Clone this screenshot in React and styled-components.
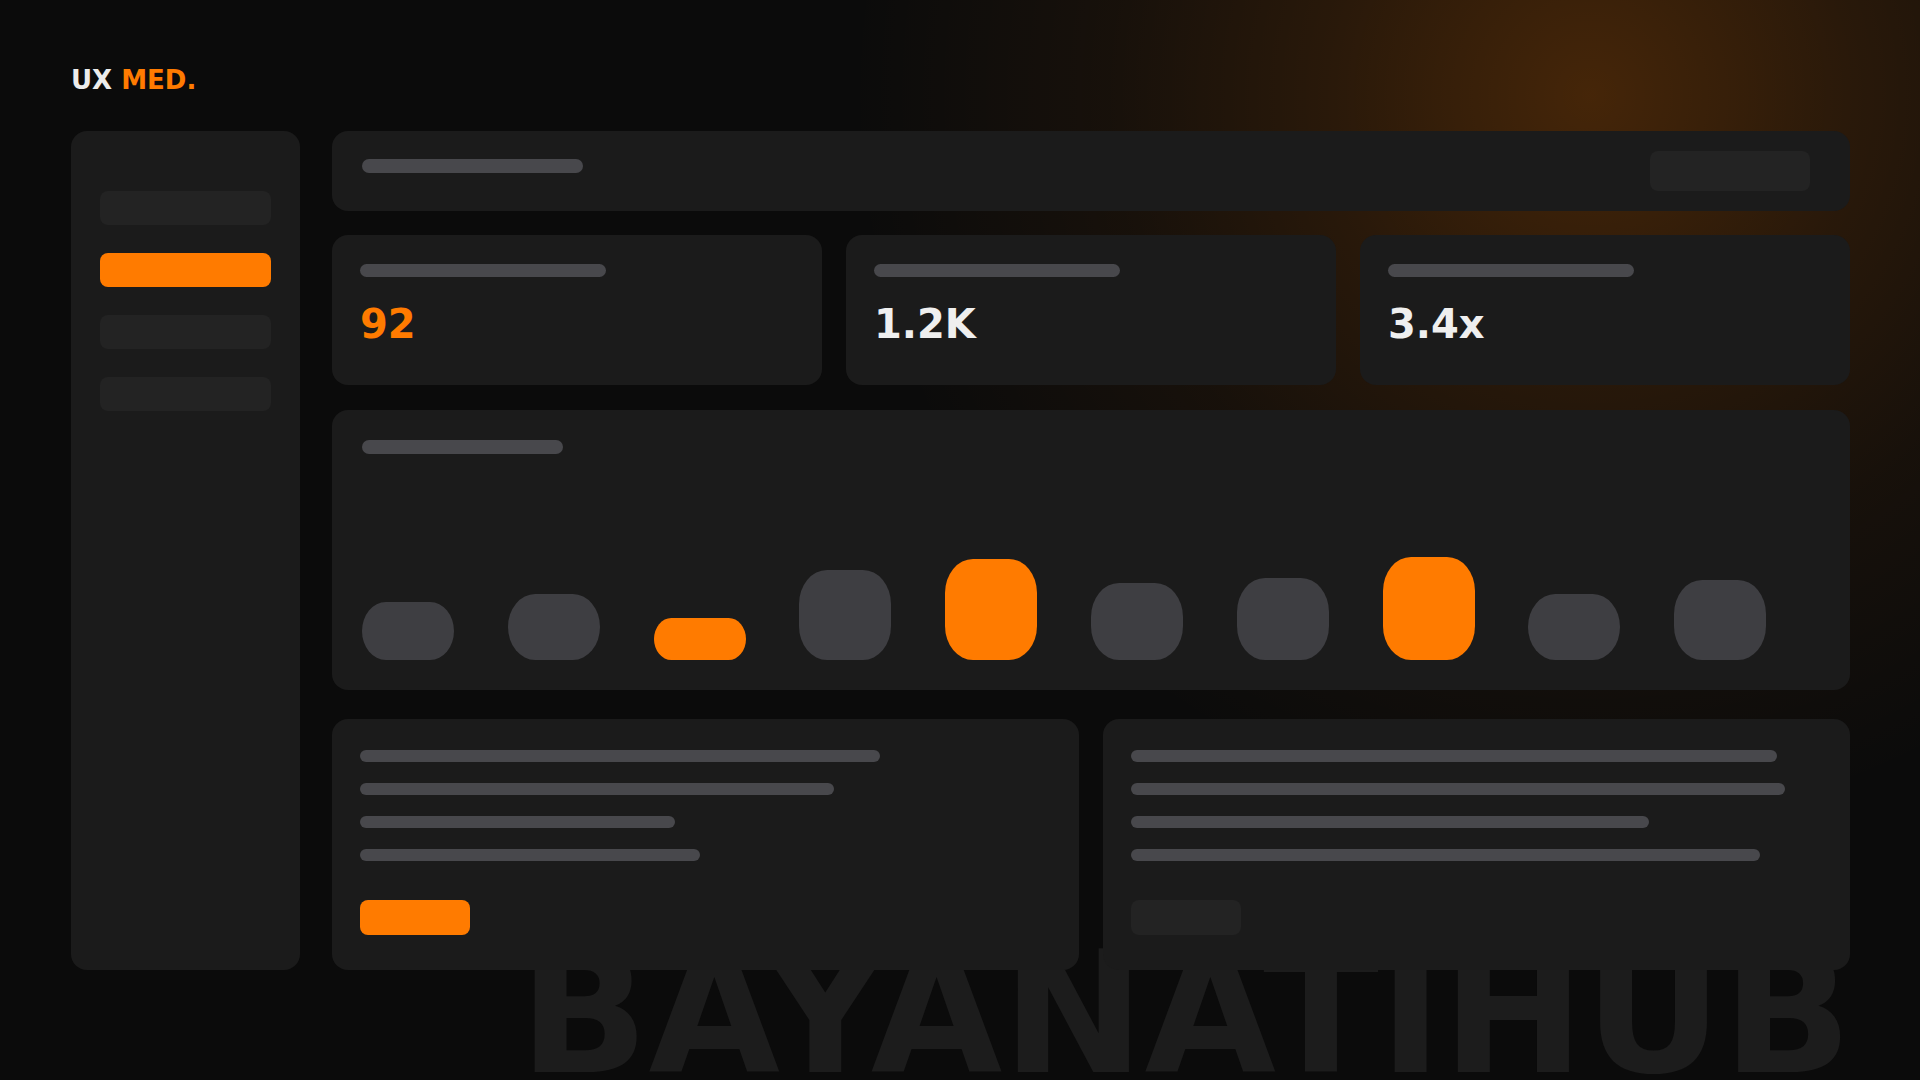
import React from 'react';
import styled, { createGlobalStyle } from 'styled-components';

const GlobalStyle = createGlobalStyle`
  html, body {
    margin: 0;
    padding: 0;
    background: #0b0b0b;
  }
  * {
    box-sizing: border-box;
  }
`;

const orange = '#ff7b00';
const card = '#1b1b1b';
const skeleton = '#48484c';

const Page = styled.div`
  position: relative;
  width: 1920px;
  height: 1080px;
  overflow: hidden;
  padding: 65px 70px 0 71px;
  font-family: "DejaVu Sans", sans-serif;
  background:
    radial-gradient(circle at 1590px 95px,
      rgba(255, 122, 0, 0.24) 0,
      rgba(255, 122, 0, 0.12) 270px,
      rgba(255, 122, 0, 0.05) 480px,
      rgba(255, 122, 0, 0) 740px),
    #0b0b0b;
`;

const Watermark = styled.div`
  position: absolute;
  left: 519px;
  bottom: -18px;
  z-index: 0;
  font-family: "DejaVu Sans", sans-serif;
  font-weight: 700;
  font-size: 170px;
  line-height: 1;
  color: #1c1c1c;
  white-space: nowrap;
  user-select: none;
`;

const Logo = styled.div`
  position: relative;
  z-index: 1;
  font-size: 26px;
  font-weight: 700;
  color: #ececec;
  height: 30px;
  line-height: normal;
  margin-bottom: 36px;

  span {
    color: ${orange};
  }
`;

const Layout = styled.div`
  position: relative;
  z-index: 1;
  display: flex;
  gap: 32px;
  height: 839px;
`;

const Sidebar = styled.aside`
  width: 229px;
  flex-shrink: 0;
  background: ${card};
  border-radius: 16px;
  padding: 60px 29px;
  display: flex;
  flex-direction: column;
  gap: 28px;
`;

const NavItem = styled.div`
  height: 34px;
  border-radius: 8px;
  background: ${(p) => (p.$active ? orange : '#232323')};
`;

const Main = styled.main`
  flex: 1;
  display: flex;
  flex-direction: column;
`;

const TopBar = styled.div`
  height: 80px;
  background: ${card};
  border-radius: 16px;
  padding: 20px 40px 20px 30px;
  display: flex;
  justify-content: space-between;
  align-items: flex-start;
`;

const Bar = styled.div`
  width: ${(p) => p.$w}px;
  height: ${(p) => p.$h || 12}px;
  border-radius: 7px;
  background: ${skeleton};
  margin-top: ${(p) => p.$mt || 0}px;
`;

const GhostButton = styled.div`
  width: 160px;
  height: 40px;
  border-radius: 8px;
  background: #232323;
`;

const StatsRow = styled.div`
  margin-top: 24px;
  height: 150px;
  display: grid;
  grid-template-columns: repeat(3, 1fr);
  gap: 24px;
`;

const StatCard = styled.div`
  background: ${card};
  border-radius: 16px;
  padding: 29px 28px;
  display: flex;
  flex-direction: column;
  gap: 24px;
`;

const StatValue = styled.div`
  font-size: 40px;
  font-weight: 700;
  line-height: normal;
  color: ${(p) => (p.$accent ? orange : '#efefef')};
`;

const ChartCard = styled.div`
  margin-top: 25px;
  height: 280px;
  background: ${card};
  border-radius: 16px;
  padding: 30px;
  display: flex;
  flex-direction: column;
`;

const BarArea = styled.div`
  flex: 1;
  display: grid;
  grid-template-columns: repeat(10, 1fr);
  align-items: end;
`;

const ChartBar = styled.div`
  width: 92px;
  border-radius: 28px / 34px;
  background: ${(p) => (p.$accent ? orange : '#3e3e42')};
`;

const BottomRow = styled.div`
  margin-top: 29px;
  flex: 1;
  display: grid;
  grid-template-columns: 1fr 1fr;
  gap: 24px;
`;

const InfoCard = styled.div`
  background: ${card};
  border-radius: 16px;
  padding: 31px 28px;
  display: flex;
  flex-direction: column;
  gap: 21px;
`;

const ActionButton = styled.div`
  width: 110px;
  height: 35px;
  border-radius: 8px;
  margin-top: 18px;
  background: ${(p) => (p.$primary ? orange : '#232323')};
`;

const bars = [
  { h: 58 },
  { h: 66 },
  { h: 42, accent: true },
  { h: 90 },
  { h: 101, accent: true },
  { h: 77 },
  { h: 82 },
  { h: 103, accent: true },
  { h: 66 },
  { h: 80 },
];

const stats = [
  { value: '92', accent: true },
  { value: '1.2K' },
  { value: '3.4x' },
];

export default function App() {
  return (
    <>
      <GlobalStyle />
      <Page>
        <Watermark>BAYANATIHUB</Watermark>
        <Logo>
          UX <span>MED.</span>
        </Logo>
        <Layout>
          <Sidebar>
            <NavItem />
            <NavItem $active />
            <NavItem />
            <NavItem />
          </Sidebar>
          <Main>
            <TopBar>
              <Bar $w={221} $h={14} $mt={8} />
              <GhostButton />
            </TopBar>

            <StatsRow>
              {stats.map((s) => (
                <StatCard key={s.value}>
                  <Bar $w={246} $h={13} />
                  <StatValue $accent={s.accent}>{s.value}</StatValue>
                </StatCard>
              ))}
            </StatsRow>

            <ChartCard>
              <Bar $w={201} $h={14} />
              <BarArea>
                {bars.map((b, i) => (
                  <ChartBar key={i} $accent={b.accent} style={{ height: b.h }} />
                ))}
              </BarArea>
            </ChartCard>

            <BottomRow>
              <InfoCard>
                <Bar $w={520} />
                <Bar $w={474} />
                <Bar $w={315} />
                <Bar $w={340} />
                <ActionButton $primary />
              </InfoCard>
              <InfoCard>
                <Bar $w={646} />
                <Bar $w={654} />
                <Bar $w={518} />
                <Bar $w={629} />
                <ActionButton />
              </InfoCard>
            </BottomRow>
          </Main>
        </Layout>
      </Page>
    </>
  );
}
